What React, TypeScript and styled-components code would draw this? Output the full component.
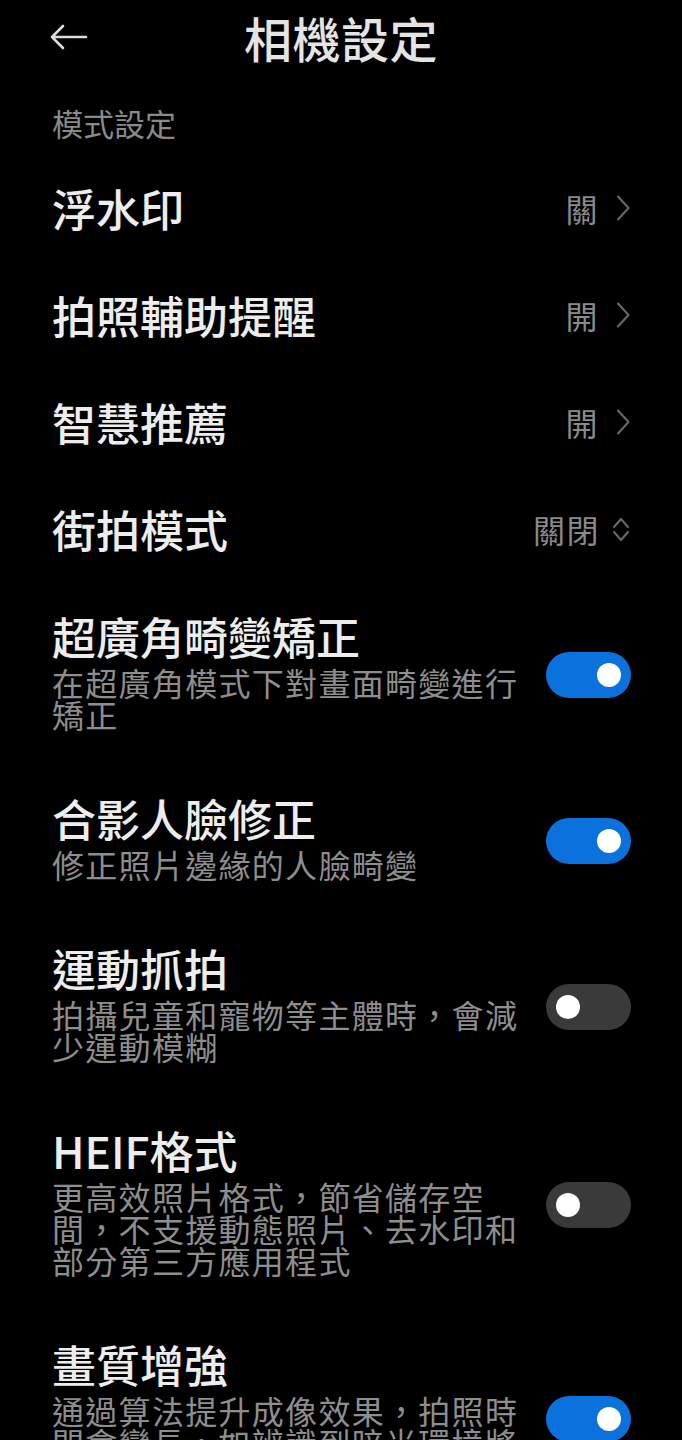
import React from "react";
import styled, { createGlobalStyle } from "styled-components";

const GlobalStyle = createGlobalStyle`
  html, body {
    margin: 0;
    padding: 0;
    background: #000;
  }
  body {
    font-family: "Noto Sans CJK TC", "Noto Sans", sans-serif;
    -webkit-font-smoothing: antialiased;
  }
`;

const Page = styled.div`
  background: #000;
  min-height: 1440px;
  display: flex;
  flex-direction: column;
`;

const Header = styled.header`
  height: 74px;
  display: grid;
  grid-template-columns: 1fr auto 1fr;
  align-items: center;
  padding: 0 50px;
`;

const BackButton = styled.button`
  justify-self: start;
  width: 40px;
  height: 28px;
  padding: 0;
  border: none;
  background: transparent;
  display: flex;
  align-items: center;
  color: #dcdcdc;
`;

const Title = styled.h1`
  margin: 0;
  font-size: 48px;
  line-height: 56px;
  font-weight: 500;
  color: #e4e4e4;
  letter-spacing: 0.5px;
`;

const SectionLabel = styled.div`
  padding: 33px 52px 15px;
  font-size: 31px;
  line-height: 32px;
  color: #8a8a8a;
`;

const NavRow = styled.div`
  height: 107px;
  padding: 0 51px 0 52px;
  display: flex;
  align-items: center;
  justify-content: space-between;
`;

const RowTitle = styled.div<{ $tall?: boolean }>`
  font-size: 44px;
  line-height: ${(p) => (p.$tall ? 60 : 52)}px;
  font-weight: 500;
  color: #ededed;
`;

const ValueGroup = styled.div<{ $gap: number }>`
  display: flex;
  align-items: center;
  gap: ${(p) => p.$gap}px;
`;

const Value = styled.span`
  font-size: 32px;
  line-height: 40px;
  color: #8a8a8a;
  letter-spacing: 1.5px;
`;

const ToggleRow = styled.div`
  padding: 23.5px 51px 34.5px 52px;
  display: flex;
  align-items: center;
  justify-content: space-between;
  gap: 16px;
`;

const TextBlock = styled.div`
  display: flex;
  flex-direction: column;
  max-width: 476px;
`;

const Sub = styled.div`
  font-size: 32px;
  line-height: 32px;
  letter-spacing: 1.3px;
  color: #8e8e8e;
`;

const Track = styled.div<{ $on: boolean }>`
  flex: none;
  margin-top: 15px;
  width: 85px;
  height: 46px;
  border-radius: 23px;
  background: ${(p) => (p.$on ? "#0b71dc" : "#3a3a3a")};
  display: flex;
  align-items: center;
  justify-content: ${(p) => (p.$on ? "flex-end" : "flex-start")};
  padding: 0 10px;
  box-sizing: border-box;
`;

const Knob = styled.div`
  width: 24px;
  height: 24px;
  border-radius: 50%;
  background: #fff;
`;

const Chevron = () => (
  <svg width="16" height="26" viewBox="0 0 16 26" fill="none">
    <path d="M3 1.5 L13.5 13 L3 24.5" stroke="#6a6a6a" strokeWidth="2" strokeLinecap="round" strokeLinejoin="round" />
  </svg>
);

const UpDown = () => (
  <svg width="20" height="28" viewBox="0 0 20 28" fill="none">
    <path d="M3 12 L10 4 L17 12" stroke="#6a6a6a" strokeWidth="2" strokeLinecap="round" strokeLinejoin="round" />
    <path d="M3 17 L10 25 L17 17" stroke="#6a6a6a" strokeWidth="2" strokeLinecap="round" strokeLinejoin="round" />
  </svg>
);

const BackArrow = () => (
  <svg width="38" height="26" viewBox="0 0 38 26" fill="none">
    <path d="M2 13 H36 M13 2 L2 13 L13 24" stroke="currentColor" strokeWidth="2.6" strokeLinecap="round" strokeLinejoin="round" />
  </svg>
);

type Nav = { title: string; value: string; select?: boolean };
const navs: Nav[] = [
  { title: "浮水印", value: "關" },
  { title: "拍照輔助提醒", value: "開" },
  { title: "智慧推薦", value: "開" },
  { title: "街拍模式", value: "關閉", select: true },
];

type Tog = { title: string; sub: string; on: boolean };
const toggles: Tog[] = [
  { title: "超廣角畸變矯正", sub: "在超廣角模式下對畫面畸變進行矯正", on: true },
  { title: "合影人臉修正", sub: "修正照片邊緣的人臉畸變", on: true },
  { title: "運動抓拍", sub: "拍攝兒童和寵物等主體時，會減少運動模糊", on: false },
  { title: "HEIF格式", sub: "更高效照片格式，節省儲存空間，不支援動態照片、去水印和部分第三方應用程式", on: false },
  { title: "畫質增強", sub: "通過算法提升成像效果，拍照時間會變長，如辨識到暗光環境將自動開啟", on: true },
];

export default function App() {
  return (
    <>
      <GlobalStyle />
      <Page>
        <Header>
          <BackButton aria-label="返回">
            <BackArrow />
          </BackButton>
          <Title>相機設定</Title>
          <span />
        </Header>
        <SectionLabel>模式設定</SectionLabel>
        {navs.map((n) => (
          <NavRow key={n.title}>
            <RowTitle>{n.title}</RowTitle>
            <ValueGroup $gap={n.select ? 11 : 16}>
              <Value>{n.value}</Value>
              {n.select ? <UpDown /> : <Chevron />}
            </ValueGroup>
          </NavRow>
        ))}
        {toggles.map((t) => (
          <ToggleRow key={t.title}>
            <TextBlock>
              <RowTitle $tall>{t.title}</RowTitle>
              <Sub>{t.sub}</Sub>
            </TextBlock>
            <Track $on={t.on}>
              <Knob />
            </Track>
          </ToggleRow>
        ))}
      </Page>
    </>
  );
}
